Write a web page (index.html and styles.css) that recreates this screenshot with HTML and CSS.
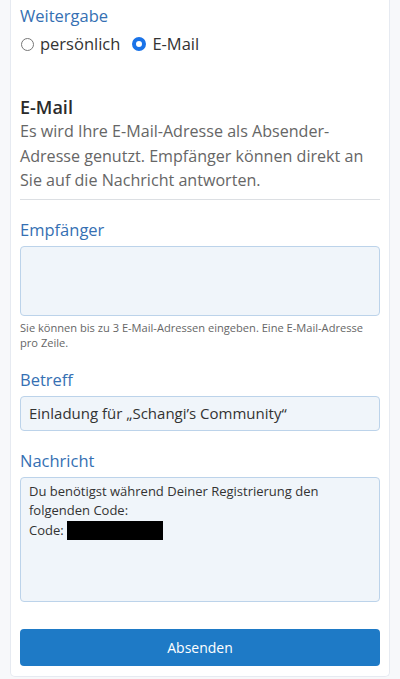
FILE: index.html
```html
<!DOCTYPE html>
<html lang="de">
<head>
<meta charset="utf-8">
<link rel="stylesheet" href="styles.css">
</head>
<body>
<div class="card">
  <div class="label first">Weitergabe</div>
  <div class="radios">
    <label class="radio"><span class="dot"></span>persönlich</label>
    <label class="radio"><span class="dot on"></span>E-Mail</label>
  </div>
  <h2 class="heading">E-Mail</h2>
  <p class="desc">Es wird Ihre E-Mail-Adresse als Absender-Adresse genutzt. Empfänger können direkt an Sie auf die Nachricht antworten.</p>
  <hr class="rule">
  <div class="label">Empfänger</div>
  <div class="field area-small"></div>
  <p class="help">Sie können bis zu 3 E-Mail-Adressen eingeben. Eine E-Mail-Adresse pro Zeile.</p>
  <div class="label">Betreff</div>
  <div class="field input">Einladung für „Schangi’s Community“</div>
  <div class="label">Nachricht</div>
  <div class="field area-big">Du benötigst während Deiner Registrierung den folgenden Code:<br>Code: <span class="redact"></span></div>
  <button class="btn">Absenden</button>
</div>
</body>
</html>
```

FILE: styles.css
```css
html, body {
  margin: 0;
  padding: 0;
  background: #f7f8fa;
  font-family: "Open Sans", sans-serif;
}
.card {
  margin: -4px 10px 0;
  background: #fff;
  border: 1px solid #e6eaf1;
  border-top: none;
  border-radius: 0 0 5px 5px;
  padding: 0 9px 10px;
  height: 681px;
  box-sizing: border-box;
  display: flex;
  flex-direction: column;
}
.label {
  color: #3570b3;
  font-size: 16.5px;
  line-height: 22px;
  margin-top: 19px;
  margin-bottom: 5px;
}
.label.first {
  margin-top: 9px;
  margin-bottom: 5px;
}
.radios {
  display: flex;
  gap: 11px;
  color: #333;
  font-size: 16.5px;
  line-height: 24px;
}
.radio {
  display: flex;
  align-items: center;
  gap: 6px;
}
.dot {
  width: 11px;
  height: 11px;
  border: 1.5px solid #777;
  border-radius: 50%;
  margin-left: 1px;
}
.dot.on {
  border: 4px solid #1a73e8;
  width: 6px;
  height: 6px;
}
.heading {
  margin: 39px 0 0;
  font-size: 18px;
  font-weight: 600;
  line-height: 24px;
  color: #2b2b2b;
}
.desc {
  margin: 0;
  color: #666;
  font-size: 16.1px;
  line-height: 24.5px;
}
.rule {
  border: none;
  border-top: 1px solid #dcdfe3;
  margin: 6px 0 0;
}
.field {
  background: #f0f5fa;
  border: 1.5px solid #bcd3ea;
  border-radius: 4px;
  box-sizing: border-box;
  color: #333;
}
.area-small {
  height: 70px;
}
.help {
  margin: 4px 0 0;
  color: #666;
  font-size: 11.1px;
  line-height: 15px;
}
.input {
  height: 35px;
  padding: 0 8px;
  font-size: 15px;
  line-height: 32px;
}
.area-big {
  height: 125px;
  padding: 4px 8px;
  font-size: 13px;
  line-height: 19.5px;
}
.redact {
  display: inline-block;
  width: 96px;
  height: 19px;
  background: #000;
  vertical-align: top;
}
.btn {
  margin-top: auto;
  height: 37px;
  border: none;
  border-radius: 4px;
  background: #1e7ac6;
  color: #fff;
  font-family: "Open Sans", sans-serif;
  font-size: 14px;
}
```
